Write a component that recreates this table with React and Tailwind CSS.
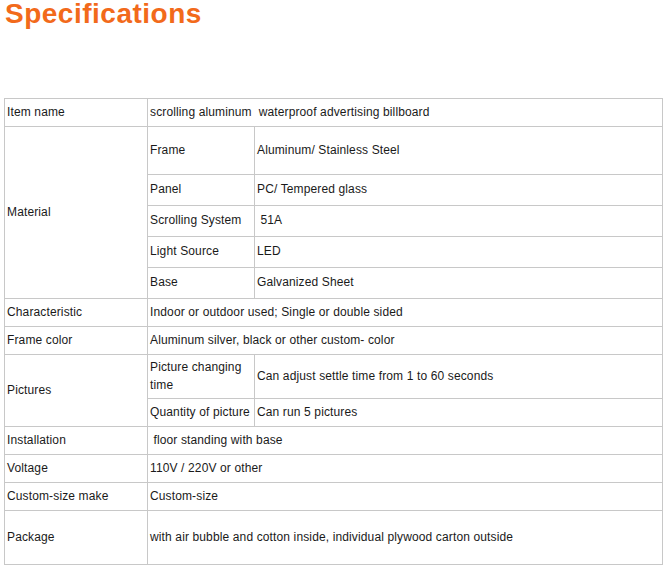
const cell = "border border-[#c8c8c8] px-[2px] pb-[2px] align-middle text-left font-normal";

export default function App() {
  return (
    <div className="min-h-screen bg-white pl-[4px] text-[12px] tracking-[0.13px] text-[#1a1a1a] [font-family:'Liberation_Sans',Arial,sans-serif]">
      <h1 className="pl-[1px] text-[28px] leading-[28px] tracking-[0.5px] font-bold text-[#f26a1b]">Specifications</h1>

      <table className="mt-[70px] w-[659px] table-fixed border-collapse">
        <colgroup>
          <col className="w-[143px]" />
          <col className="w-[107px]" />
          <col />
        </colgroup>
        <tbody>
          <tr className="h-[28px]">
            <td className={cell}>Item name</td>
            <td className={cell} colSpan={2}>
              scrolling aluminum&nbsp; waterproof advertising billboard
            </td>
          </tr>
          <tr className="h-[48px]">
            <td className={cell} rowSpan={5}>Material</td>
            <td className={cell}>Frame</td>
            <td className={cell}>Aluminum/ Stainless Steel</td>
          </tr>
          <tr className="h-[31px]">
            <td className={cell}>Panel</td>
            <td className={cell}>PC/ Tempered glass</td>
          </tr>
          <tr className="h-[31px]">
            <td className={cell}>Scrolling System</td>
            <td className={cell}>&nbsp;51A</td>
          </tr>
          <tr className="h-[31px]">
            <td className={cell}>Light Source</td>
            <td className={cell}>LED</td>
          </tr>
          <tr className="h-[31px]">
            <td className={cell}>Base</td>
            <td className={cell}>Galvanized Sheet</td>
          </tr>
          <tr className="h-[28px]">
            <td className={cell}>Characteristic</td>
            <td className={cell} colSpan={2}>Indoor or outdoor used; Single or double sided</td>
          </tr>
          <tr className="h-[28px]">
            <td className={cell}>Frame color</td>
            <td className={cell} colSpan={2}>Aluminum silver, black or other custom- color</td>
          </tr>
          <tr className="h-[44px]">
            <td className={cell} rowSpan={2}>Pictures</td>
            <td className={`${cell} leading-[18px]`}>Picture changing time</td>
            <td className={cell}>Can adjust settle time from 1 to 60 seconds</td>
          </tr>
          <tr className="h-[28px]">
            <td className={cell}>Quantity of picture</td>
            <td className={cell}>Can run 5 pictures</td>
          </tr>
          <tr className="h-[28px]">
            <td className={cell}>Installation</td>
            <td className={cell} colSpan={2}>&nbsp;floor standing with base</td>
          </tr>
          <tr className="h-[28px]">
            <td className={cell}>Voltage</td>
            <td className={cell} colSpan={2}>110V / 220V or other</td>
          </tr>
          <tr className="h-[28px]">
            <td className={cell}>Custom-size make</td>
            <td className={cell} colSpan={2}>Custom-size</td>
          </tr>
          <tr className="h-[54px]">
            <td className={cell}>Package</td>
            <td className={cell} colSpan={2}>with air bubble and cotton inside, individual plywood carton outside</td>
          </tr>
        </tbody>
      </table>
    </div>
  );
}
